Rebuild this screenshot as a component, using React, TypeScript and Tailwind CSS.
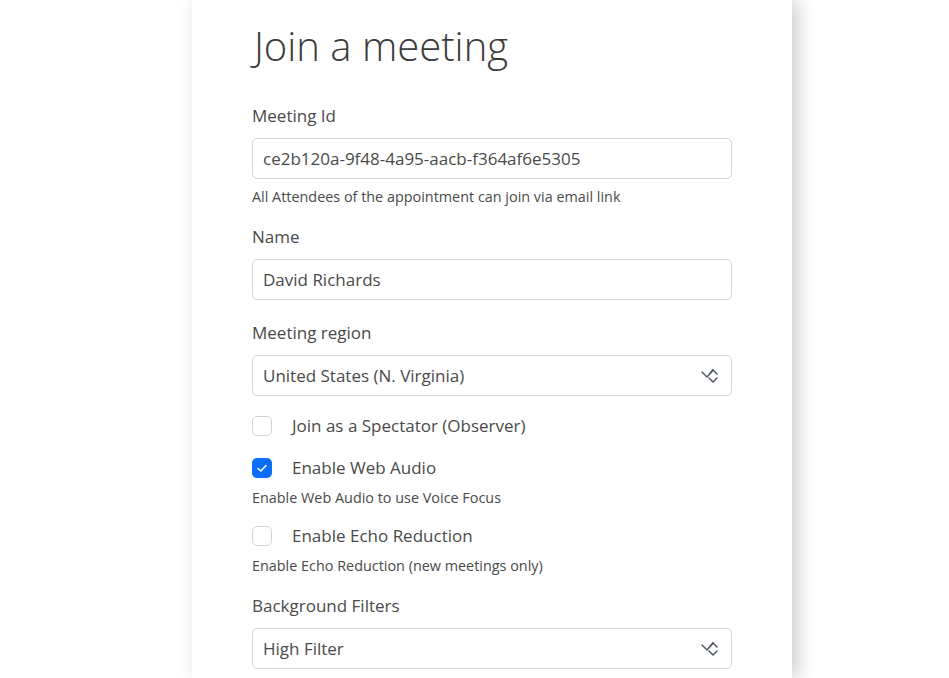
import React from 'react';

const font = { fontFamily: '"Open Sans", "Noto Sans", sans-serif' };

const SelectIcon = () => (
  <svg width="18" height="16" viewBox="0 0 18 16" fill="none" stroke="#4a5260" strokeWidth="1.4" strokeLinecap="round" strokeLinejoin="round">
    <path d="M1 4 L6 9 L12 2" />
    <path d="M12 2 L9 5.5" />
    <path d="M12 2 L16 6" />
    <path d="M8 10 L12 14 L16 10" />
  </svg>
);

const Field: React.FC<{ value: string; select?: boolean }> = ({ value, select }) => (
  <div className="flex items-center justify-between h-[41px] border border-[#ced4da] rounded-[5px] pl-[10px] pr-[12px] text-[17px] text-[#4a4a4a] bg-white">
    <span>{value}</span>
    {select && <SelectIcon />}
  </div>
);

const Check: React.FC<{ label: string; checked?: boolean }> = ({ label, checked }) => (
  <div className="flex items-center h-6">
    {checked ? (
      <span className="w-5 h-5 rounded-[5px] bg-[#0d6efd] flex items-center justify-center">
        <svg width="12" height="10" viewBox="0 0 12 10" fill="none" stroke="white" strokeWidth="1.5" strokeLinecap="round" strokeLinejoin="round">
          <path d="M2 5.5 L4.8 8 L10 2.5" />
        </svg>
      </span>
    ) : (
      <span className="w-5 h-5 rounded-[5px] border border-[#ced4da] bg-white" />
    )}
    <span className="ml-[20px] text-[17px] text-[#4a4a4a]">{label}</span>
  </div>
);

export default function App() {
  return (
    <div className="min-h-[678px] bg-white" style={font}>
      <div className="ml-[192px] w-[600px] min-h-[678px] bg-white shadow-[6px_0_18px_rgba(0,0,0,0.2)] px-[60px] pt-[22px]">
        <h1 className="ml-[2px] text-[40px] leading-[48px] font-light text-[#3b3b3b]">Join a meeting</h1>

        <div className="mt-[34px] text-[17px] leading-6 text-[#4a4a4a]">Meeting Id</div>
        <div className="mt-[10px]"><Field value="ce2b120a-9f48-4a95-aacb-f364af6e5305" /></div>
        <div className="mt-[7px] text-[14.4px] leading-[21px] text-[#4a4a4a]">All Attendees of the appointment can join via email link</div>

        <div className="mt-[18px] text-[17px] leading-6 text-[#4a4a4a]">Name</div>
        <div className="mt-[10px]"><Field value="David Richards" /></div>

        <div className="mt-[21px] text-[17px] leading-6 text-[#4a4a4a]">Meeting region</div>
        <div className="mt-[10px]"><Field value="United States (N. Virginia)" select /></div>

        <div className="mt-[18px]"><Check label="Join as a Spectator (Observer)" /></div>
        <div className="mt-[18px]"><Check label="Enable Web Audio" checked /></div>
        <div className="mt-[7px] text-[14.4px] leading-[21px] text-[#4a4a4a]">Enable Web Audio to use Voice Focus</div>
        <div className="mt-[16px]"><Check label="Enable Echo Reduction" /></div>
        <div className="mt-[7px] text-[14.4px] leading-[21px] text-[#4a4a4a]">Enable Echo Reduction (new meetings only)</div>

        <div className="mt-[18px] text-[17px] leading-6 text-[#4a4a4a]">Background Filters</div>
        <div className="mt-[10px]"><Field value="High Filter" select /></div>
      </div>
    </div>
  );
}
